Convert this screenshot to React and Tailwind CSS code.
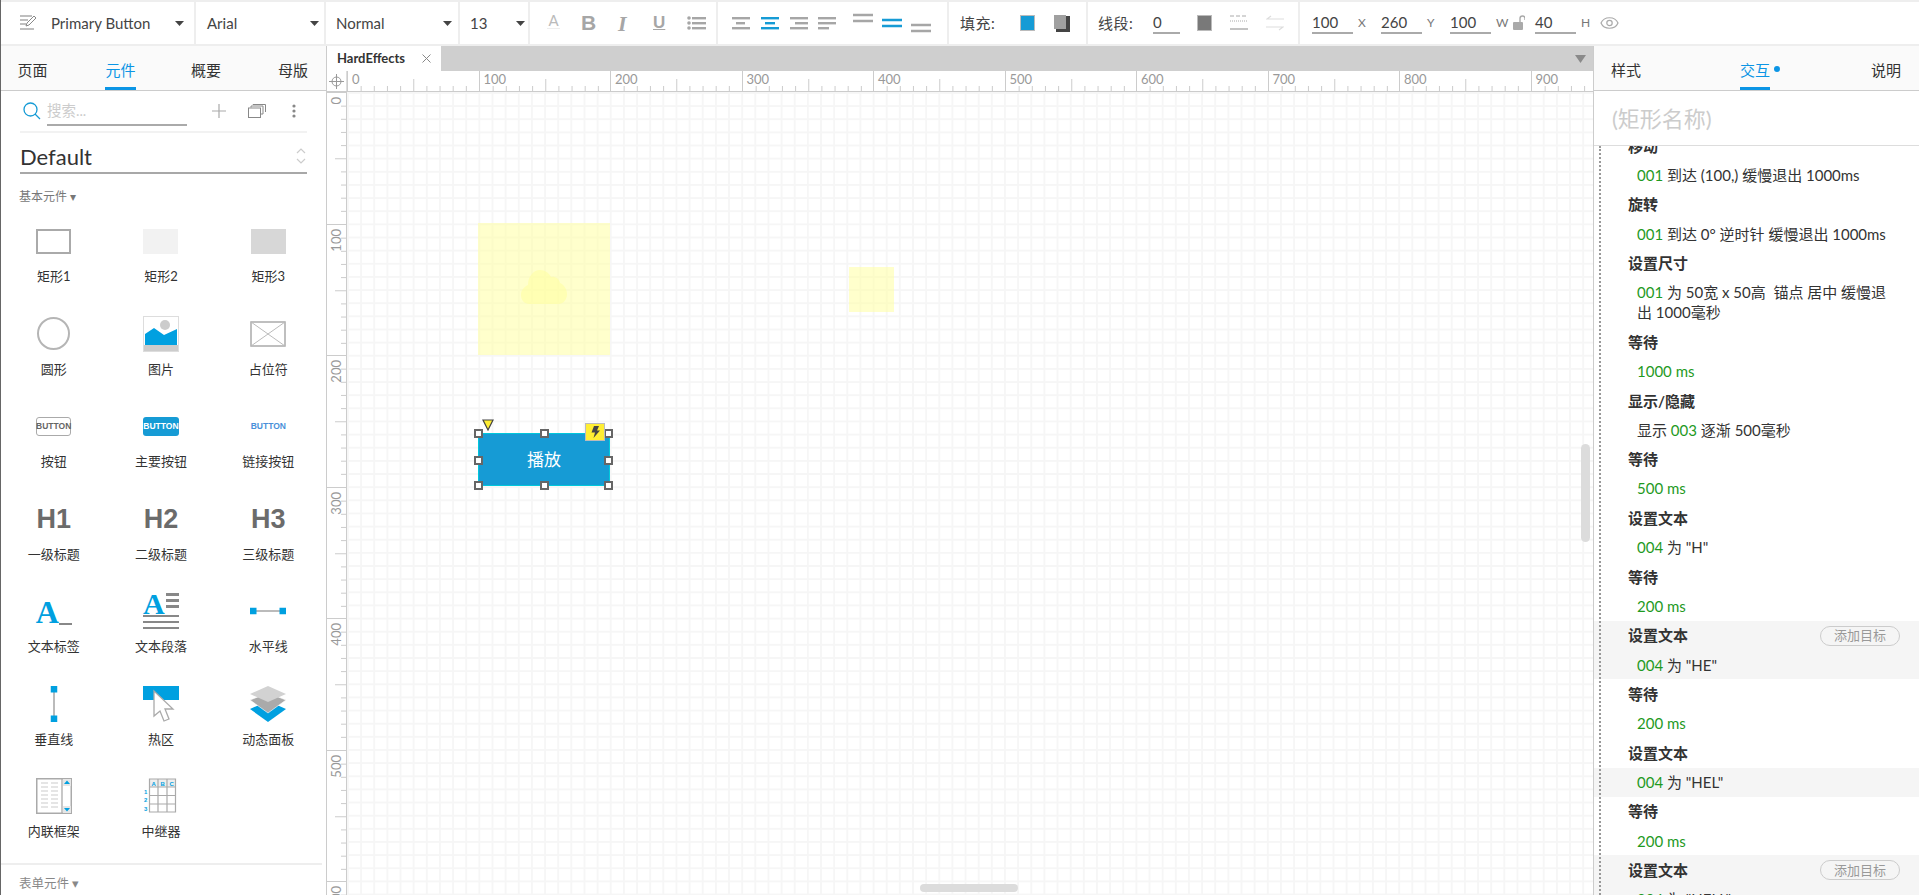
import React from 'react';

const Caret = ({ className = '' }) => (
  <svg width="9" height="5" viewBox="0 0 9 5" className={className}><path d="M0 0h9L4.5 5z" fill="#444" /></svg>
);

const Bars = ({ bars, active }) => (
  <svg width="20" height="16" viewBox="0 0 20 16">
    {bars.map((b, i) => (
      <rect key={i} x={b[0]} y={b[1]} width={b[2]} height="2.4" fill={active ? '#169bd5' : '#a6a6a6'} />
    ))}
  </svg>
);

const Field = ({ v, l, w = 'w-[41px]', gap = 'mr-[5px]', lw = 'w-[18px]' }) => (
  <div className="flex items-center">
    <div className={`${w} h-[21px] border-b-2 border-[#aaa] text-[15px] leading-[18px] text-[#444]`}>{v}</div>
    <span className={`${lw} pl-[5px] text-[12px] text-[#777] ${gap}`}>{l}</span>
  </div>
);

const widgets = [
  ['矩形1', <div className="w-[35px] h-[25px] border-2 border-[#aaa] bg-white" />],
  ['矩形2', <div className="w-[35px] h-[25px] bg-[#f2f2f2]" />],
  ['矩形3', <div className="w-[35px] h-[25px] bg-[#d7d7d7]" />],
  ['圆形', <div className="w-[33px] h-[33px] rounded-full border-2 border-[#b5b5b5] bg-white" />],
  ['图片', (
    <svg width="36" height="36" viewBox="0 0 36 36">
      <rect x="0.5" y="0.5" width="35" height="35" fill="#fff" stroke="#ddd" />
      <rect x="1" y="29" width="34" height="6" fill="#ccc" />
      <circle cx="22" cy="9" r="5" fill="#ccc" />
      <path d="M2 29V18l9-6 10 7 13-6v16z" fill="#00a0e0" />
    </svg>
  )],
  ['占位符', (
    <svg width="36" height="26" viewBox="0 0 36 26">
      <rect x="1" y="1" width="34" height="24" fill="#fff" stroke="#aaa" strokeWidth="1.5" />
      <path d="M1 1l34 24M35 1L1 25" stroke="#bbb" strokeWidth="1" />
    </svg>
  )],
  ['按钮', <div className="w-[35px] h-[19px] rounded-[3px] border border-[#aaa] flex items-center justify-center text-[8.5px] font-bold text-[#666] font-['Liberation_Sans',sans-serif]">BUTTON</div>],
  ['主要按钮', <div className="w-[36px] h-[19px] rounded-[3px] bg-[#169bd5] flex items-center justify-center text-[8.5px] font-bold text-white font-['Liberation_Sans',sans-serif]">BUTTON</div>],
  ['链接按钮', <div className="w-[36px] h-[19px] flex items-center justify-center text-[8.5px] font-bold text-[#4a90d9] font-['Liberation_Sans',sans-serif]">BUTTON</div>],
  ['一级标题', <div className="h-[34px] leading-[34px] text-[27px] font-bold text-[#6b6b6b] font-['Liberation_Sans',sans-serif]">H1</div>],
  ['二级标题', <div className="h-[34px] leading-[34px] text-[27px] font-bold text-[#6b6b6b] font-['Liberation_Sans',sans-serif]">H2</div>],
  ['三级标题', <div className="h-[34px] leading-[34px] text-[27px] font-bold text-[#6b6b6b] font-['Liberation_Sans',sans-serif]">H3</div>],
  ['文本标签', (
    <div className="w-[36px] h-[30px] flex items-end">
      <span className="text-[32px] leading-[30px] font-bold text-[#00a0e0] font-['Liberation_Serif',serif] -mb-[1px]">A</span>
      <span className="w-[13px] h-[2.5px] bg-[#888] mb-[1px] ml-[0px]" />
    </div>
  )],
  ['文本段落', (
    <div className="w-[36px] h-[36px] relative">
      <span className="absolute left-0 top-[-4px] text-[30px] leading-[30px] font-bold text-[#00a0e0] font-['Liberation_Serif',serif]">A</span>
      <div className="absolute right-0 top-0 w-[13px] flex flex-col gap-[3.5px]">
        <div className="h-[2.5px] bg-[#888]" /><div className="h-[2.5px] bg-[#888]" /><div className="h-[2.5px] bg-[#888]" />
      </div>
      <div className="absolute left-0 right-0 bottom-0 flex flex-col gap-[3.5px]">
        <div className="h-[2.5px] bg-[#888]" /><div className="h-[2.5px] bg-[#888]" /><div className="h-[2.5px] bg-[#888]" />
      </div>
    </div>
  )],
  ['水平线', (
    <svg width="36" height="8" viewBox="0 0 36 8"><path d="M3 4h30" stroke="#bbb" strokeWidth="2" /><rect width="6.5" height="6.5" y="0.75" fill="#00a0e0" /><rect x="29.5" width="6.5" height="6.5" y="0.75" fill="#00a0e0" /></svg>
  )],
  ['垂直线', (
    <svg width="8" height="36" viewBox="0 0 8 36"><path d="M4 3v30" stroke="#bbb" strokeWidth="2" /><rect x="0.75" width="6.5" height="6.5" fill="#00a0e0" /><rect x="0.75" y="29.5" width="6.5" height="6.5" fill="#00a0e0" /></svg>
  )],
  ['热区', (
    <svg width="36" height="36" viewBox="0 0 36 36">
      <rect width="36" height="14" fill="#00a0e0" />
      <path d="M11 5v25l6-5 4 10 5-2-4-10h8z" fill="#fff" stroke="#aaa" strokeWidth="1.3" />
    </svg>
  )],
  ['动态面板', (
    <svg width="36" height="36" viewBox="0 0 36 36">
      <path d="M0 23l18-8 18 8-18 13z" fill="#00a0e0" />
      <path d="M0 14l18-7 18 7-18 13z" fill="#aaa" stroke="#fff" strokeWidth="0.6" />
      <path d="M0 8L18 0l18 8-18 8z" fill="#d2d2d2" />
    </svg>
  )],
  ['内联框架', (
    <svg width="36" height="36" viewBox="0 0 36 36">
      <rect x="0.75" y="0.75" width="34.5" height="34.5" fill="#fff" stroke="#aaa" strokeWidth="1.5" />
      <path d="M26 1v34" stroke="#aaa" strokeWidth="1.3" />
      {[5, 9, 13, 17, 21, 25, 29].map((y) => <path key={y} d={`M5 ${y}h7M15 ${y}h7`} stroke="#ccc" strokeWidth="1.2" />)}
      <path d="M27 1h8v7h-8zM27 28h8v7h-8z" fill="#e6e6e6" />
      <path d="M28 6l3-3.500 3 3.500zM28 30l3 3.500 3-3.500z" fill="#00a0e0" />
    </svg>
  )],
  ['中继器', (
    <svg width="36" height="36" viewBox="0 0 36 36">
      <rect x="6" y="1" width="27" height="8" fill="#eee" />
      <path d="M6.500 1h26v33h-26zM6.500 9h26M6.500 17.500h26M6.500 26h26M15 1v33M24 1v33" fill="none" stroke="#aaa" strokeWidth="1.2" />
      <g fontSize="6" fontWeight="700" fill="#00a0e0" fontFamily="Liberation Sans, sans-serif">
        <text x="8.500" y="7.500">A</text><text x="17.500" y="7.500">B</text><text x="26.500" y="7.500">C</text>
        <text x="1" y="15.500">1</text><text x="1" y="24">2</text><text x="1" y="32.500">3</text>
      </g>
    </svg>
  )],
];

const blocks = [
  { h: '移动', d: [[['001', 1], [' 到达 (100,) 缓慢退出 1000ms', 0]]] },
  { h: '旋转', d: [[['001', 1], [' 到达 0° 逆时针 缓慢退出 1000ms', 0]]] },
  { h: '设置尺寸', d: [[['001', 1], [' 为 50宽 x 50高  锚点 居中 缓慢退出 1000毫秒', 0]]] },
  { h: '等待', d: [[['1000 ms', 1]]] },
  { h: '显示/隐藏', d: [[['显示 ', 0], ['003', 1], [' 逐渐 500毫秒', 0]]] },
  { h: '等待', d: [[['500 ms', 1]]] },
  { h: '设置文本', d: [[['004', 1], [' 为 "H"', 0]]] },
  { h: '等待', d: [[['200 ms', 1]]] },
  { h: '设置文本', d: [[['004', 1], [' 为 "HE"', 0]]], hl: 'all', btn: true },
  { h: '等待', d: [[['200 ms', 1]]] },
  { h: '设置文本', d: [[['004', 1], [' 为 "HEL"', 0]]], hl: 'detail' },
  { h: '等待', d: [[['200 ms', 1]]] },
  { h: '设置文本', d: [[['004', 1], [' 为 "HELL"', 0]]], hl: 'all', btn: true },
];

const Handle = ({ cls }) => (
  <div className={`absolute w-[9px] h-[9px] bg-white border-2 border-[#666] ${cls}`} />
);

export default function App() {
  return (
    <div className="w-[1919px] h-[895px] overflow-hidden flex flex-col bg-white border-l border-[#666] text-[#333] font-[Lato,'Noto_Sans_CJK_SC',sans-serif]">
      {/* toolbar */}
      <div className="h-[46px] shrink-0 flex border-t-2 border-b-2 border-[#eeeeee] text-[15px] text-[#444]">
        <div className="w-[195px] flex items-center border-r-2 border-[#eee] pl-[19px]">
          <svg width="16" height="18" viewBox="0 0 16 18" className="mr-[15px]">
            <path d="M0 2h12M0 6h8M0 10h6M0 15h14" stroke="#aaa" strokeWidth="1.3" />
            <path d="M6 12l1-3 7-7 2 2-7 7z" fill="#fff" stroke="#888" strokeWidth="1" />
          </svg>
          <span className="w-[124px]">Primary Button</span>
          <Caret />
        </div>
        <div className="w-[130px] flex items-center border-r-2 border-[#eee] pl-[11px]">
          <span className="w-[103px]">Arial</span><Caret />
        </div>
        <div className="w-[134px] flex items-center border-r-2 border-[#eee] pl-[10px]">
          <span className="w-[107px]">Normal</span><Caret />
        </div>
        <div className="w-[70px] flex items-center border-r-2 border-[#eee] pl-[10px]">
          <span className="w-[46px]">13</span><Caret />
        </div>
        <div className="w-[188px] flex items-center border-r-2 border-[#eee] pl-[17px] text-[#a6a6a6]">
          <span className="w-[34px] flex flex-col items-start -mt-[5px] leading-[16px] text-[#bbb]"><span className="w-[13px] text-[15px] border-b border-[#eee] text-center">A</span></span>
          <span className="w-[37px] text-[21px] font-bold font-['Liberation_Sans',sans-serif]">B</span>
          <span className="w-[35px] text-[22px] font-bold italic font-['Liberation_Serif',serif]">I</span>
          <span className="w-[34px] text-[17px] font-bold font-['Liberation_Sans',sans-serif] underline">U</span>
          <svg width="20" height="14" viewBox="0 0 20 14"><g fill="#a6a6a6"><circle cx="2" cy="2" r="1.800" /><circle cx="2" cy="7" r="1.800" /><circle cx="2" cy="12" r="1.800" /><rect x="5" y="1" width="14" height="2.400" /><rect x="5" y="6" width="14" height="2.400" /><rect x="5" y="11" width="14" height="2.400" /></g></svg>
        </div>
        <div className="w-[231px] flex items-center border-r-2 border-[#eee] pl-[13px]">
          <div className="flex gap-[9px] mr-[15px]">
            <Bars bars={[[1, 2, 18], [5, 7, 9], [1, 12, 18]]} />
            <Bars active bars={[[1, 2, 18], [5, 7, 10], [1, 12, 18]]} />
            <Bars bars={[[1, 2, 18], [6, 7, 13], [1, 12, 18]]} />
            <Bars bars={[[0, 2, 18], [0, 7, 18], [0, 12, 11]]} />
          </div>
          <div className="flex items-center gap-[9px]">
            <svg width="20" height="10" viewBox="0 0 20 10" className="mb-[10px]"><path d="M0 2h20M0 8h20" stroke="#a6a6a6" strokeWidth="2.400" /></svg>
            <svg width="20" height="10" viewBox="0 0 20 10"><path d="M0 2h20M0 8h20" stroke="#169bd5" strokeWidth="2.400" /></svg>
            <svg width="20" height="10" viewBox="0 0 20 10" className="mt-[10px]"><path d="M0 2h20M0 8h20" stroke="#a6a6a6" strokeWidth="2.400" /></svg>
          </div>
        </div>
        <div className="w-[139px] flex items-center border-r-2 border-[#eee] pl-[11px]">
          <span className="w-[60px] tracking-[0.5px]">填充:</span>
          <div className="w-[15px] h-[16px] bg-[#169bd5] border border-[#bbb] mr-[19px]" />
          <div className="relative w-[16px] h-[17px]">
            <div className="absolute left-[2px] top-[1px] w-[14px] h-[16px] bg-[#444]" />
            <div className="absolute left-0 top-0 w-[12px] h-[14px] bg-[#a0a0a0]" />
          </div>
        </div>
        <div className="w-[212px] flex items-center border-r-2 border-[#eee] pl-[10px]">
          <span className="w-[55px] tracking-[0.5px]">线段:</span>
          <div className="w-[27px] h-[21px] border-b-2 border-[#aaa] leading-[18px] mr-[17px]">0</div>
          <div className="w-[15px] h-[16px] bg-[#797979] border border-[#bbb] mr-[18px]" />
          <svg width="18" height="16" viewBox="0 0 18 16" className="mr-[18px]"><path d="M0 1h18" stroke="#aaa" strokeDasharray="4 2" /><path d="M0 6h18" stroke="#aaa" strokeDasharray="1 1" /><path d="M0 14h18" stroke="#aaa" strokeWidth="1.400" /></svg>
          <svg width="18" height="16" viewBox="0 0 18 16"><path d="M18 4H1l4-3M0 12h17l-4 3" fill="none" stroke="#ddd" strokeWidth="1.200" /></svg>
        </div>
        <div className="flex-1 flex items-center pl-[12px]">
          <Field v="100" l="X" gap="mr-[6px]" lw="w-[22px]" />
          <Field v="260" l="Y" gap="mr-[6px]" lw="w-[22px]" />
          <Field v="100" l="W" gap="mr-[0px]" lw="w-[22px]" />
          <svg width="12" height="16" viewBox="0 0 12 16" className="mr-[10px]"><path d="M7 7V3.500a2.500 2.500 0 0 1 5 0V5" fill="none" stroke="#aaa" strokeWidth="1.400" /><rect x="0" y="7" width="10" height="8" rx="1" fill="#aaa" /></svg>
          <Field v="40" l="H" gap="mr-[10px]" lw="w-[14px]" />
          <svg width="19" height="14" viewBox="0 0 19 14"><path d="M1 7c3-7 14-7 17 0-3 7-14 7-17 0z" fill="none" stroke="#aaa" strokeWidth="1.200" /><circle cx="9.500" cy="7" r="2.700" fill="none" stroke="#aaa" strokeWidth="1.200" /></svg>
        </div>
      </div>

      <div className="flex-1 flex min-h-0">
        {/* left panel */}
        <aside className="w-[326px] shrink-0 flex flex-col border-r border-[#ccc]">
          <div className="h-[45px] shrink-0 bg-[#fafafa] border-b border-[#ccc] grid grid-cols-4 text-[15px] pl-[3px] pr-[2px]">
            {['页面', '元件', '概要', '母版'].map((t, i) => (
              <div key={t} className={`relative flex items-center justify-center pt-[5px] ${i === 1 ? 'text-[#0b95e5]' : 'text-[#333]'}`}>
                <span className={`relative h-full flex items-center ${i === 0 ? '-ml-[23px]' : i === 1 ? '-ml-[7px]' : i === 2 ? 'ml-[4px]' : 'ml-[18px]'}`}>
                  {t}
                  {i === 1 && <span className="absolute left-0 right-0 bottom-0 h-[3px] bg-[#0b95e5]" />}
                </span>
              </div>
            ))}
          </div>
          <div className="h-[42px] shrink-0 mx-[19px] border-b-2 border-[#f2f2f2] flex items-center">
            <svg width="18" height="18" viewBox="0 0 18 18" className="ml-[3px] mr-[6px]"><circle cx="7.500" cy="7.500" r="6.500" fill="none" stroke="#169bd5" strokeWidth="1.300" /><path d="M12 12l5 5" stroke="#169bd5" strokeWidth="1.300" /></svg>
            <div className="w-[140px] h-[25px] border-b-2 border-[#aaa] text-[14.500px] text-[#ccc] leading-[20px] mt-[4px]">搜索...</div>
            <svg width="14" height="14" viewBox="0 0 14 14" className="ml-[25px]"><path d="M7 0v14M0 7h14" stroke="#aaa" strokeWidth="1.200" /></svg>
            <svg width="18" height="14" viewBox="0 0 18 14" className="ml-[22px]"><rect x="0.500" y="4" width="12" height="9.500" fill="#fff" stroke="#888" /><path d="M3 3.500V2h12v8h-2M5 1V0.500h12.500V8" fill="none" stroke="#888" /></svg>
            <svg width="4" height="14" viewBox="0 0 4 14" className="ml-[26px]"><g fill="#888"><circle cx="2" cy="2" r="1.600" /><circle cx="2" cy="7" r="1.600" /><circle cx="2" cy="12" r="1.600" /></g></svg>
          </div>
          <div className="h-[41px] shrink-0 mx-[19px] border-b-2 border-[#a8a8a8] flex items-center justify-between text-[22px] text-[#333] pt-[7px]">
            <span>Default</span>
            <svg width="10" height="18" viewBox="0 0 10 18" className="mr-[1px]"><path d="M1 6l4-4 4 4M1 12l4 4 4-4" fill="none" stroke="#ccc" strokeWidth="1.200" /></svg>
          </div>
          <div className="h-[33px] shrink-0 pl-[18px] pt-[15px] text-[12px] leading-[16px] text-[#777]">基本元件 ▾</div>
          <div className="h-[658px] shrink-0 -ml-[1px] w-[322px] grid grid-cols-3 auto-rows-[92.500px] overflow-hidden border-b-2 border-[#eee] pt-[7px]">
            {widgets.map(([label, icon]) => (
              <div key={label} className="flex flex-col items-center">
                <div className="h-[54px] flex items-center justify-center">{icon}</div>
                <div className="text-[13px] leading-[20px] text-[#333] -mt-[2px]">{label}</div>
              </div>
            ))}
          </div>
          <div className="pl-[18px] pt-[10px] text-[12.500px] leading-[18px] text-[#888]">表单元件 ▾</div>
        </aside>

        {/* center */}
        <main className="flex-1 min-w-0 flex flex-col relative">
          <div className="h-[25px] shrink-0 bg-[#cfcfcf] flex justify-between items-center">
            <div className="w-[114px] h-full bg-white flex items-center pl-[10px] text-[13px] font-bold text-[#333]">
              <span className="w-[85px]">HardEffects</span>
              <svg width="9" height="9" viewBox="0 0 9 9"><path d="M0.500 0.500l8 8M8.500 0.500l-8 8" stroke="#888" /></svg>
            </div>
            <svg width="11" height="8" viewBox="0 0 11 8" className="mr-[7px]"><path d="M0 0h11L5.500 8z" fill="#8a8a8a" /></svg>
          </div>
          <div className="h-[21px] shrink-0 flex border-b border-[#ccc] overflow-hidden">
            <div className="w-[20px] shrink-0 flex items-center justify-center border-r border-[#ddd]">
              <svg width="15" height="15" viewBox="0 0 15 15"><circle cx="7.500" cy="7.500" r="4.500" fill="none" stroke="#999" /><path d="M7.500 0v15M0 7.500h15" stroke="#999" /></svg>
            </div>
            {[0, 100, 200, 300, 400, 500, 600, 700, 800, 900].map((n) => (
              <div key={n} className="w-[131.500px] shrink-0 relative border-l border-[#ccc] pl-[4px] text-[13px] leading-[17px] text-[#999]">
                {n}
                <svg width="131" height="20" viewBox="0 0 131 20" className="absolute left-0 bottom-0">
                  {[1, 2, 3, 4, 6, 7, 8, 9].map((t) => <path key={t} d={`M${t * 13.150} 15v5`} stroke="#ccc" />)}
                  <path d="M65.750 8v12" stroke="#ccc" />
                </svg>
              </div>
            ))}
          </div>
          <div className="flex-1 min-h-0 flex">
            <div className="w-[20px] shrink-0 border-r border-[#ccc] overflow-hidden">
              {[0, 100, 200, 300, 400, 500, 600].map((n) => (
                <div key={n} className="h-[131.500px] relative border-t border-[#ccc] text-[13px] text-[#999]">
                  <span className="absolute left-[2px] top-[4px] [writing-mode:vertical-rl] rotate-180 leading-[14px]">{n}</span>
                  <svg width="20" height="131" viewBox="0 0 20 131" className="absolute left-0 top-0">
                    {[1, 2, 3, 4, 6, 7, 8, 9].map((t) => <path key={t} d={`M14 ${t * 13.150}h6`} stroke="#ccc" />)}
                    <path d="M8 65.750h12" stroke="#ccc" />
                  </svg>
                </div>
              ))}
            </div>
            <div className="flex-1 relative overflow-hidden bg-[linear-gradient(to_right,#f6f6f6_1.500px,transparent_1.500px),linear-gradient(to_bottom,#f6f6f6_1.500px,transparent_1.500px)] bg-[size:13.150px_13.150px]">
              <div className="absolute left-[131px] top-[131px] w-[132px] h-[132px] bg-[#ffff99]/50 flex items-center justify-center">
                <svg width="46" height="34" viewBox="0 0 46 34" className="-mt-[4px]"><path d="M9 34C3 34 0 30 0 25c0-5 3-8 7-10C7 6 13 0 19 0c5 0 9 3 11 7 3-1 8 1 9 6 4 2 7 6 7 11 0 6-4 10-9 10z" fill="#ffff99" fillOpacity="0.5" /></svg>
              </div>
              <div className="absolute left-[502px] top-[175px] w-[45px] h-[45px] bg-[#ffff99]/50" />
              <div className="absolute left-[131px] top-[341px] w-[132px] h-[53px] bg-[#169bd5] border border-[#00c8dc] flex items-center justify-center text-white text-[17px]">播放</div>
              <Handle cls="left-[127px] top-[337px]" />
              <Handle cls="left-[193px] top-[337px]" />
              <Handle cls="left-[257px] top-[337px]" />
              <Handle cls="left-[127px] top-[364px]" />
              <Handle cls="left-[257px] top-[364px]" />
              <Handle cls="left-[127px] top-[389px]" />
              <Handle cls="left-[193px] top-[389px]" />
              <Handle cls="left-[257px] top-[389px]" />
              <svg width="12" height="12" viewBox="0 0 12 12" className="absolute left-[135px] top-[327px]"><path d="M1 1h10L6 11z" fill="#ffee33" stroke="#444" strokeWidth="1.200" /></svg>
              <div className="absolute left-[238px] top-[331px] w-[20px] h-[18px] bg-[#ffee33] border border-[#bbb] flex items-center justify-center">
                <svg width="9" height="12" viewBox="0 0 9 12"><path d="M3 0h5L6 4.500h3L2.500 12 4 6.500H0.500z" fill="#444" /></svg>
              </div>
              <div className="absolute left-[573px] bottom-[3px] w-[98px] h-[8px] rounded-full bg-[#dcdcdc]" />
              <div className="absolute right-[3px] top-[352px] w-[9px] h-[98px] rounded-full bg-[#dcdcdc]" />
            </div>
          </div>
        </main>

        {/* right panel */}
        <aside className="w-[326px] shrink-0 flex flex-col border-l border-[#ccc]">
          <div className="h-[45px] shrink-0 bg-[#fafafa] border-b border-[#ccc] flex justify-between text-[15px] pl-[17px] pr-[18px] pt-[5px]">
            <span className="flex items-center">样式</span>
            <span className="relative flex items-center text-[#0b95e5] -ml-[2px]">
              交互
              <span className="absolute left-[34px] top-[15px] w-[6px] h-[6px] rounded-full bg-[#0b95e5]" />
              <span className="absolute left-0 w-[30px] bottom-0 h-[3px] bg-[#0b95e5]" />
            </span>
            <span className="flex items-center">说明</span>
          </div>
          <div className="h-[55px] shrink-0 border-b border-[#ddd] pl-[18px] flex items-center text-[22px] text-[#cccccc]">(矩形名称)</div>
          <div className="flex-1 min-h-0 overflow-hidden relative">
            <div className="absolute left-[5px] top-0 bottom-0 border-l-2 border-dotted border-[#999] z-10" />
            <div className="-mt-[15px] text-[15px] text-[#333]">
              {blocks.map((b, i) => (
                <div key={i} className={b.hl === 'all' ? 'bg-[#f5f5f5]' : ''}>
                  <div className="h-[30px] pl-[34px] pr-[19px] flex items-center justify-between font-bold">
                    <span>{b.h}</span>
                    {b.btn && (
                      <span className="w-[80px] h-[20px] rounded-full border border-[#ccc] flex items-center justify-center text-[13px] font-normal text-[#999]">添加目标</span>
                    )}
                  </div>
                  <div className={`pl-[43px] pr-[26px] leading-[20px] pt-[4px] pb-[4.700px] whitespace-pre-wrap ${b.hl === 'detail' ? 'bg-[#f5f5f5]' : ''}`}>
                    {b.d[0].map(([t, g], j) => (
                      <span key={j} className={g ? 'text-[#1f9a1f]' : ''}>{t}</span>
                    ))}
                  </div>
                </div>
              ))}
            </div>
          </div>
        </aside>
      </div>
    </div>
  );
}
